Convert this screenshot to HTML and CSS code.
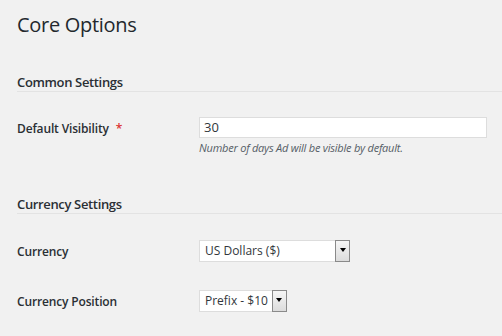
FILE: index.html
```html
<!DOCTYPE html>
<html>
<head>
<meta charset="utf-8">
<link rel="stylesheet" href="styles.css">
</head>
<body>
<div class="wrap">
  <h1 class="title">Core Options</h1>

  <h2 class="section">Common Settings</h2>
  <div class="row row-first">
    <div class="label">Default Visibility <span class="req">*</span></div>
    <div class="field">
      <div class="input">30</div>
      <p class="desc">Number of days Ad will be visible by default.</p>
    </div>
  </div>

  <h2 class="section section-2">Currency Settings</h2>
  <div class="row row-cur">
    <div class="label">Currency</div>
    <div class="field">
      <div class="select select-wide"><span class="sel-text">US Dollars ($)</span><span class="sel-btn"><span class="tri"></span></span></div>
    </div>
  </div>
  <div class="row row-pos">
    <div class="label">Currency Position</div>
    <div class="field">
      <div class="select"><span class="sel-text">Prefix - $10</span><span class="sel-btn"><span class="tri"></span></span></div>
    </div>
  </div>
</div>
</body>
</html>
```

FILE: styles.css
```css
html, body {
  margin: 0;
  padding: 0;
  background: #f1f1f1;
}
body {
  font-family: "Open Sans", "Liberation Sans", sans-serif;
  color: #23282d;
  font-size: 13px;
}
.wrap {
  padding: 10px 0 0 17px;
}
.title {
  margin: 0;
  font-size: 20px;
  line-height: 29px;
  font-weight: 400;
  letter-spacing: -0.3px;
  color: #23282d;
}
.section {
  margin: 34px 0 0 0;
  font-size: 13px;
  line-height: 18px;
  font-weight: 600;
  letter-spacing: -0.35px;
  border-bottom: 1px solid #e3e3e3;
  color: #2a2f34;
}
.section-2 {
  margin-top: 40px;
}
.row {
  display: flex;
}
.row-first { margin-top: 25px; }
.row-cur { margin-top: 26px; }
.row-pos { margin-top: 27px; }
.label {
  width: 182px;
  flex: none;
  font-size: 12px;
  font-weight: 600;
  letter-spacing: -0.15px;
  line-height: 22px;
  padding-top: 1px;
  color: #2a2f34;
}
.row-first .label { padding-top: 1px; line-height: 21px; }
.req {
  color: #dc3232;
  margin-left: 4px;
}
.input {
  box-sizing: border-box;
  width: 288px;
  height: 21px;
  border: 1px solid #dddddd;
  background: #fff;
  padding: 0 4px;
  line-height: 19px;
  font-size: 13px;
  color: #32373c;
}
.desc {
  margin: 2px 0 0 0;
  font-size: 11px;
  line-height: 15px;
  font-style: italic;
  letter-spacing: -0.22px;
  color: #555d66;
}
.select {
  box-sizing: border-box;
  display: inline-flex;
  height: 22px;
  border: 1px solid #dddddd;
  background: #fff;
  align-items: stretch;
}
.select-wide { width: 151px; }
.sel-text {
  flex: 1;
  padding: 0 4px 0 5px;
  line-height: 20px;
  font-size: 12px;
  color: #32373c;
  white-space: nowrap;
}
.sel-btn {
  box-sizing: border-box;
  width: 15px;
  margin: -1px -1px -1px 0;
  border: 1px solid #8a8a8a;
  background: linear-gradient(#f6f6f6, #dcdcdc);
  display: flex;
  align-items: center;
  justify-content: center;
}
.tri {
  width: 0;
  height: 0;
  border-left: 3px solid transparent;
  border-right: 3px solid transparent;
  border-top: 4px solid #000;
  margin-top: -2px;
}
```
